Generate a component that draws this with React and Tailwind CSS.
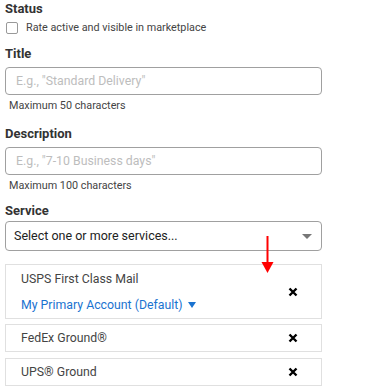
export default function App() {
  const font = { fontFamily: "Roboto, 'Liberation Sans', sans-serif" };

  const XIcon = () => (
    <svg width="10" height="10" viewBox="0 0 10 10" className="shrink-0">
      <path d="M1.5 1.5L8.5 8.5M8.5 1.5L1.5 8.5" stroke="#000" strokeWidth="2.4" />
    </svg>
  );

  return (
    <div className="relative h-[391px] w-[369px] bg-white pl-[5px] text-[#333]" style={font}>
      <div className="flex w-[317px] flex-col">
        <div className="mt-[1px] h-4 text-[13px] font-bold leading-4 text-[#333]">Status</div>
        <label className="mt-[5px] flex h-3 items-center gap-[8px] pl-[1px]">
          <span className="h-3 w-3 rounded-[2px] border border-[#999] bg-white" />
          <span className="text-[10.8px] leading-3 text-[#444]">Rate active and visible in marketplace</span>
        </label>

        <div className="mt-[12px] h-4 text-[13px] font-bold leading-4">Title</div>
        <div className="mt-[5px] flex h-[28px] items-center rounded-[4px] border border-[#a0a0a0] px-[10px]">
          <span className="text-[12.3px] text-[#bdbdbd]">E.g., "Standard Delivery"</span>
        </div>
        <div className="mt-[4px] h-[14px] pl-[4px] text-[10.8px] leading-[14px] text-[#444]">Maximum 50 characters</div>

        <div className="mt-[13px] h-4 text-[13px] font-bold leading-4">Description</div>
        <div className="mt-[5px] flex h-[28px] items-center rounded-[4px] border border-[#a0a0a0] px-[10px]">
          <span className="text-[12.3px] text-[#bdbdbd]">E.g., "7-10 Business days"</span>
        </div>
        <div className="mt-[4px] h-[14px] pl-[4px] text-[10.8px] leading-[14px] text-[#444]">Maximum 100 characters</div>

        <div className="mt-[10px] h-4 text-[13px] font-bold leading-4">Service</div>
        <div className="mt-[2px] flex h-[30px] items-center justify-between rounded-[4px] border border-[#a0a0a0] pl-[8px] pr-[9px]">
          <span className="text-[12.5px] text-[#222]">Select one or more services...</span>
          <svg width="10" height="5" viewBox="0 0 10 5">
            <path d="M0 0H10L5 5Z" fill="#777" />
          </svg>
        </div>

        <div className="mt-[13px] flex h-[55px] items-center justify-between border border-[#e0e0e0] pl-[15px] pr-[23px]">
          <div className="flex flex-col">
            <span className="text-[12.3px] leading-4 text-[#444]">USPS First Class Mail</span>
            <span className="mt-[10px] flex items-center gap-[5px] text-[12.3px] leading-4 text-[#1a73d0]">
              My Primary Account (Default)
              <svg width="8" height="6" viewBox="0 0 8 6">
                <path d="M0 0H8L4 6Z" fill="#1a73d0" />
              </svg>
            </span>
          </div>
          <XIcon />
        </div>
        <div className="mt-[5px] flex h-[28px] items-center justify-between border border-[#e0e0e0] pl-[15px] pr-[23px]">
          <span className="text-[12.3px] text-[#444]">FedEx Ground®</span>
          <XIcon />
        </div>
        <div className="mt-[6px] flex h-[28px] items-center justify-between border border-[#e0e0e0] pl-[15px] pr-[23px]">
          <span className="text-[12.3px] text-[#444]">UPS® Ground</span>
          <XIcon />
        </div>
      </div>

      <svg className="absolute left-[261px] top-[236px]" width="13" height="38" viewBox="0 0 13 38">
        <path d="M6.5 0V28" stroke="#f00" strokeWidth="2" />
        <path d="M0.5 26H12.5L6.5 37Z" fill="#f00" />
      </svg>
    </div>
  );
}
